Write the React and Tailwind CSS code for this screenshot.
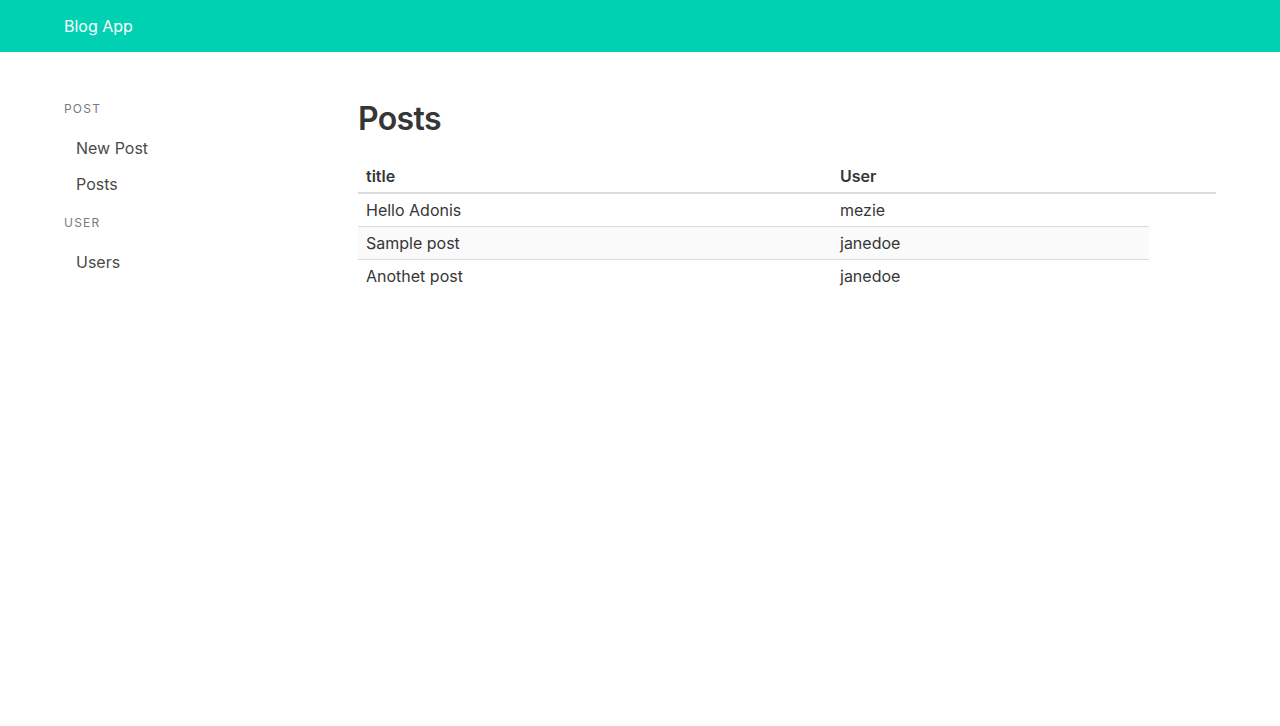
import React from "react";

const posts = [
  { title: "Hello Adonis", user: "mezie" },
  { title: "Sample post", user: "janedoe" },
  { title: "Anothet post", user: "janedoe" },
];

const menu = [
  { label: "Post", items: ["New Post", "Posts"] },
  { label: "User", items: ["Users"] },
];

function Navbar() {
  return (
    <nav className="h-[52px] bg-[#00d1b2] flex items-center px-16">
      <a className="text-white text-base">Blog App</a>
    </nav>
  );
}

function Sidebar() {
  return (
    <aside className="w-[358px] shrink-0 pl-16 pt-12">
      {menu.map((group, i) => (
        <div key={group.label} className={i > 0 ? "mt-3" : ""}>
          <p className="h-[18px] flex items-center text-[12px] uppercase tracking-[0.1em] text-[#7a7a7a] mb-3">
            {group.label}
          </p>
          <ul>
            {group.items.map((item) => (
              <li key={item}>
                <a className="h-9 flex items-center px-3 text-base text-[#4a4a4a]">
                  {item}
                </a>
              </li>
            ))}
          </ul>
        </div>
      ))}
    </aside>
  );
}

function PostsTable() {
  return (
    <div className="text-base text-[#363636]">
      <div className="w-[858px] h-[34px] flex border-b-2 border-[#dbdbdb]">
        <div className="w-[474px] h-8 flex items-center px-2 font-semibold">title</div>
        <div className="h-8 flex items-center px-2 font-semibold">User</div>
      </div>
      {posts.map((post, i) => (
        <div
          key={i}
          className={
            "w-[791px] h-[33px] flex " +
            (i < posts.length - 1 ? "border-b border-[#dbdbdb] " : "") +
            (i % 2 === 1 ? "bg-[#fafafa]" : "")
          }
        >
          <div className="w-[474px] h-8 flex items-center px-2">{post.title}</div>
          <div className="h-8 flex items-center px-2">{post.user}</div>
        </div>
      ))}
    </div>
  );
}

export default function App() {
  return (
    <div className="min-h-[726px] bg-white font-['Inter',sans-serif]">
      <Navbar />
      <div className="flex">
        <Sidebar />
        <main className="pt-[49px]">
          <h1 className="text-[32px] leading-[36px] font-semibold tracking-[-0.02em] text-[#363636] mb-[23px]">
            Posts
          </h1>
          <PostsTable />
        </main>
      </div>
    </div>
  );
}
